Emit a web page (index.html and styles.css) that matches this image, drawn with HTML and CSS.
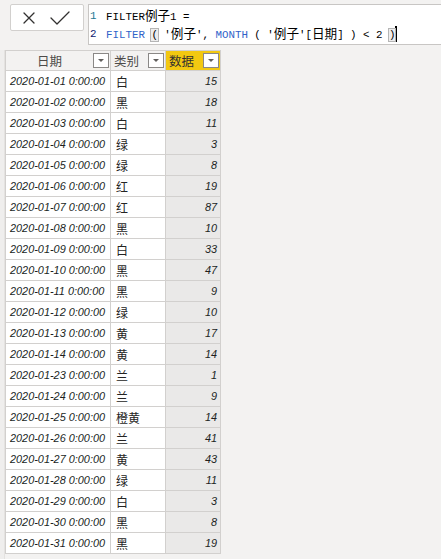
FILE: index.html
```html
<!DOCTYPE html>
<html lang="zh">
<head>
<meta charset="utf-8">
<title>FILTER例子1</title>
<link rel="stylesheet" href="styles.css">
</head>
<body>
<div class="topbar">
  <div class="actions">
    <svg class="ico-x" width="12" height="12" viewBox="0 0 12 12"><path d="M1 1 L11 11 M11 1 L1 11" /></svg>
    <svg class="ico-ok" width="20" height="14" viewBox="0 0 20 14"><path d="M1 7 L7 13 L19 1" /></svg>
  </div>
  <div class="formula">
    <div class="line"><span class="num n1">1</span><span class="code">FILTER<span class="cj">例子</span>1 =</span></div>
    <div class="line"><span class="num n2">2</span><span class="code"><span class="kw">FILTER</span> <span class="br">(</span> '<span class="cj">例子</span>', <span class="kw">MONTH</span> ( '<span class="cj">例子</span>'[<span class="cj">日期</span>] ) &lt; 2 <span class="br">)</span><span class="caret"></span></span></div>
  </div>
</div>
<div class="main">
  <div class="strip"></div>
  <div class="grid">
    <div class="hd c1"><span class="hl">日期</span><span class="dd"></span></div>
    <div class="hd c2"><span class="hl">类别</span><span class="dd"></span></div>
    <div class="hd c3 sel"><span class="hl">数据</span><span class="dd"></span></div>

    <div class="d">2020-01-01 0:00:00</div><div class="k">白</div><div class="v">15</div>
    <div class="d">2020-01-02 0:00:00</div><div class="k">黑</div><div class="v">18</div>
    <div class="d">2020-01-03 0:00:00</div><div class="k">白</div><div class="v">11</div>
    <div class="d">2020-01-04 0:00:00</div><div class="k">绿</div><div class="v">3</div>
    <div class="d">2020-01-05 0:00:00</div><div class="k">绿</div><div class="v">8</div>
    <div class="d">2020-01-06 0:00:00</div><div class="k">红</div><div class="v">19</div>
    <div class="d">2020-01-07 0:00:00</div><div class="k">红</div><div class="v">87</div>
    <div class="d">2020-01-08 0:00:00</div><div class="k">黑</div><div class="v">10</div>
    <div class="d">2020-01-09 0:00:00</div><div class="k">白</div><div class="v">33</div>
    <div class="d">2020-01-10 0:00:00</div><div class="k">黑</div><div class="v">47</div>
    <div class="d">2020-01-11 0:00:00</div><div class="k">黑</div><div class="v">9</div>
    <div class="d">2020-01-12 0:00:00</div><div class="k">绿</div><div class="v">10</div>
    <div class="d">2020-01-13 0:00:00</div><div class="k">黄</div><div class="v">17</div>
    <div class="d">2020-01-14 0:00:00</div><div class="k">黄</div><div class="v">14</div>
    <div class="d">2020-01-23 0:00:00</div><div class="k">兰</div><div class="v">1</div>
    <div class="d">2020-01-24 0:00:00</div><div class="k">兰</div><div class="v">9</div>
    <div class="d">2020-01-25 0:00:00</div><div class="k">橙黄</div><div class="v">14</div>
    <div class="d">2020-01-26 0:00:00</div><div class="k">兰</div><div class="v">41</div>
    <div class="d">2020-01-27 0:00:00</div><div class="k">黄</div><div class="v">43</div>
    <div class="d">2020-01-28 0:00:00</div><div class="k">绿</div><div class="v">11</div>
    <div class="d">2020-01-29 0:00:00</div><div class="k">白</div><div class="v">3</div>
    <div class="d">2020-01-30 0:00:00</div><div class="k">黑</div><div class="v">8</div>
    <div class="d">2020-01-31 0:00:00</div><div class="k">黑</div><div class="v">19</div>
  </div>
</div>
</body>
</html>
```
FILE: styles.css
```css
html, body {
  margin: 0;
  padding: 0;
  background: #f3f2f1;
  width: 441px;
  height: 559px;
  overflow: hidden;
}

body {
  font-family: "Liberation Sans", "Noto Sans CJK SC", sans-serif;
  color: #252423;
}

.topbar {
  display: flex;
  align-items: flex-start;
  padding: 4px 0 0 10px;
  gap: 4px;
  height: 41px;
}

.actions {
  box-sizing: border-box;
  width: 74px;
  height: 27px;
  background: #ffffff;
  border: 1px solid #d2d0ce;
  border-radius: 2px;
  display: flex;
  align-items: center;
  padding-left: 12px;
  gap: 15px;
}

.actions svg path {
  fill: none;
  stroke: #323130;
  stroke-width: 1.3;
  stroke-linecap: round;
  stroke-linejoin: round;
}

.formula {
  flex: 1;
  box-sizing: border-box;
  height: 41px;
  background: #ffffff;
  border: 1px solid #c8c6c4;
  border-right: none;
  padding-top: 2px;
}

.line {
  display: flex;
  height: 18px;
  line-height: 18px;
  font-family: "Liberation Mono", "Noto Sans CJK SC", monospace;
  font-size: 10.8px;
  color: #000000;
  white-space: pre;
}

.num {
  width: 17px;
  padding-left: 1px;
  box-sizing: border-box;
}

.n1 { color: #237893; }
.n2 { color: #0b216f; }

.code {
  display: block;
  height: 18px;
  line-height: 18px;
}

.cj {
  font-family: "Noto Sans CJK SC", sans-serif;
  font-size: 12.6px;
  line-height: 16px;
}

.kw { color: #2f63c9; }

.br {
  background: #ededed;
  outline: 1px solid #b5b5b5;
  outline-offset: 0;
}

.caret {
  display: inline-block;
  width: 2px;
  height: 16px;
  background: #000000;
  vertical-align: middle;
  margin-top: -2px;
}

.main {
  display: flex;
  align-items: flex-start;
  padding-top: 5px;
}

.strip {
  width: 4px;
  height: 520px;
  border-right: 1px solid #e4e2e0;
  background: #efeeed;
}

.grid {
  display: grid;
  grid-template-columns: 105px 55px 55px;
  grid-template-rows: 20px;
  grid-auto-rows: 21px;
  border-left: 1px solid #d2d0ce;
  border-top: 1px solid #d2d0ce;
}

.grid > div {
  box-sizing: border-box;
  border-right: 1px solid #d2d0ce;
  border-bottom: 1px solid #d2d0ce;
  display: flex;
  align-items: center;
  white-space: nowrap;
  overflow: hidden;
}

.hd {
  background: #f3f2f1;
  font-family: "Noto Sans CJK SC", sans-serif;
  font-size: 12.5px;
  color: #4d4b49;
  padding-right: 1px;
}

.hd.sel {
  background: #f2c811;
  color: #323130;
}

.hl { flex: 1; }

.c1 .hl { text-align: center; }
.c2 .hl, .c3 .hl { padding-left: 3px; }

.dd {
  box-sizing: border-box;
  width: 16px;
  height: 15px;
  background: #ffffff;
  border: 1px solid #8a8886;
  position: relative;
}

.dd::after {
  content: "";
  position: absolute;
  left: 4px;
  top: 5px;
  border-left: 3px solid transparent;
  border-right: 3px solid transparent;
  border-top: 3px solid #605e5c;
}

.d, .k, .v {
  background: #ffffff;
}

.d {
  font-style: italic;
  font-size: 10.9px;
  padding-left: 4px;
  color: #201f1e;
}

.k {
  font-family: "Noto Sans CJK SC", sans-serif;
  font-size: 12px;
  padding-left: 5px;
}

.v {
  background: #eae9e8 !important;
  font-style: italic;
  font-size: 10.9px;
  justify-content: flex-end;
  padding-right: 3px;
  color: #201f1e;
}
```
